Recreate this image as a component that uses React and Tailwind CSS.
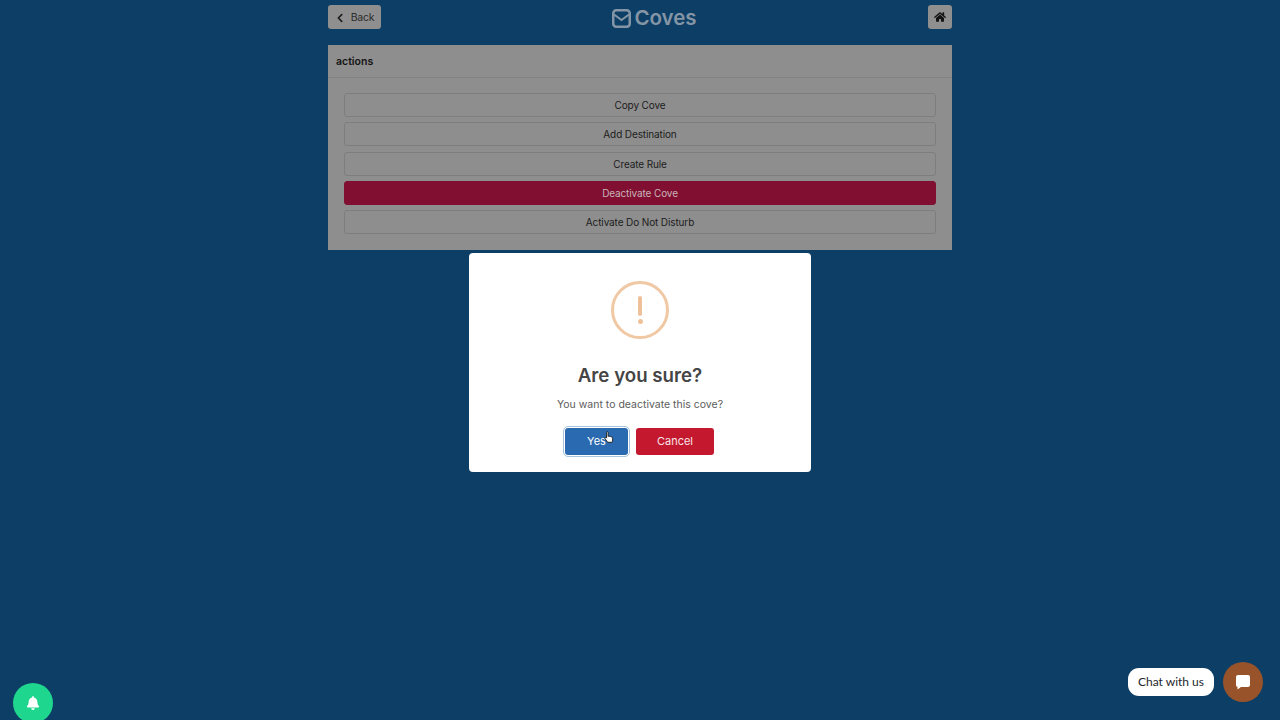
import { FaBell, FaChevronLeft, FaHome } from "react-icons/fa";

const actions = [
    { label: "Copy Cove" },
    { label: "Add Destination" },
    { label: "Create Rule" },
    { label: "Deactivate Cove", danger: true },
    { label: "Activate Do Not Disturb" },
];

function ActionButton({ label, danger }) {
    const tone = danger
        ? "bg-[#800f31] border-[#800f31] text-[#c9b4ba]"
        : "border-[#7e7e7e] text-[#1c1c1c]";
    return (
        <div className={`h-6 pt-[1px] flex items-center justify-center rounded-[3px] border text-[10px] tracking-[-0.12px] ${tone}`}>
            {label}
        </div>
    );
}

function ConfirmModal() {
    return (
        <div className="absolute left-[469px] top-[253px] w-[342px] h-[219px] bg-white rounded-[4px] flex flex-col items-center pt-[28px]">
            <div className="w-[58px] h-[58px] rounded-full border-[3px] border-[#f0c8a4] flex flex-col items-center justify-center">
                <div className="w-1 h-[20px] rounded-full bg-[#eec19b]" />
                <div className="w-[5px] h-[5px] rounded-full bg-[#eec19b] mt-[3px]" />
            </div>
            <h2 className="mt-[23px] text-[18.7px] leading-[28px] font-semibold text-[#454545]">Are you sure?</h2>
            <p className="mt-[7px] text-[10.5px] leading-4 text-[#5c5c5c]">You want to deactivate this cove?</p>
            <div className="mt-[15px] mr-[1px] flex items-center gap-2">
                <div className="relative w-[63px] h-[27px] rounded-[3px] bg-[#2a6ab1] outline-[1.5px] outline-offset-[1px] outline-[#a9c4de] flex items-center justify-center text-[11px] text-white">
                    Yes
                    <svg className="absolute left-[39px] top-[3px]" width="11" height="14" viewBox="0 0 11 14">
                        <path d="M2.6 1.4c0-1 1.5-1 1.5 0v4l.4-.1c.5-.3 1.1-.1 1.3.3.5-.3 1.1-.1 1.3.4.6-.3 1.3.1 1.4.7.4 1.6.2 3-.4 4.6H3.7L1 7.6c-.6-.8.4-1.7 1.1-1l.5.5z" fill="#fff" stroke="#22262b" strokeWidth="1" strokeLinejoin="round" />
                    </svg>
                </div>
                <div className="w-[78px] h-[27px] rounded-[3px] bg-[#c4182f] flex items-center justify-center text-[11px] text-[#f8e3e6]">
                    Cancel
                </div>
            </div>
        </div>
    );
}

export default function App() {
    return (
        <div className="relative w-[1280px] h-[720px] overflow-hidden bg-[#0d3f66] font-['Inter',sans-serif]">
            <div className="w-[624px] ml-[328px]">
                <header className="h-[45px] pt-[5px] flex items-start justify-between">
                    <div className="w-[53px] h-6 pt-[1px] rounded-[3px] bg-[#8f8f8f] flex items-center justify-center gap-[6px] text-[10.5px] tracking-[-0.2px] text-[#2c2c2c]">
                        <FaChevronLeft className="w-[10px] h-[10px] text-[#1c1c1c]" />
                        Back
                    </div>
                    <div className="h-[26px] flex items-center gap-[3px] text-[20.5px] font-semibold text-[#8495a5]">
                        <svg width="19" height="19" viewBox="0 0 19 19" fill="none" stroke="#8495a5">
                            <rect x="1.25" y="1.25" width="16.5" height="16.5" rx="3" strokeWidth="2.5" />
                            <path d="M2 5.5l7.5 5.5 7.5-5.5" strokeWidth="2" />
                        </svg>
                        Coves
                    </div>
                    <div className="w-6 h-6 rounded-[3px] bg-[#8f8f8f] flex items-center justify-center">
                        <FaHome className="w-3 h-3 text-[#141414]" />
                    </div>
                </header>

                <section className="h-[205px] bg-[#8e8e8e]">
                    <div className="h-[33px] pt-[2px] px-2 flex items-center border-b border-[#828282] text-[10.5px] font-semibold text-[#141414]">
                        actions
                    </div>
                    <div className="px-4 pt-[15px] flex flex-col gap-[5.33px]">
                        {actions.map((action) => (
                            <ActionButton key={action.label} {...action} />
                        ))}
                    </div>
                </section>
            </div>

            <ConfirmModal />

            <div className="absolute left-[13px] top-[683px] w-10 h-10 rounded-full bg-[#1fd68f] flex items-center justify-center">
                <FaBell className="w-[14px] h-[14px] text-white" />
            </div>

            <div className="absolute right-[17px] top-[662px] flex items-center gap-[9px]">
                <div className="h-[28px] w-[86px] rounded-[11px] bg-white flex items-center justify-center font-['Lato',sans-serif] text-[12px] text-[#23262b]">
                    Chat with us
                </div>
                <div className="w-10 h-10 rounded-full bg-[#99532b] flex items-center justify-center">
                    <svg width="16" height="16" viewBox="0 0 16 16">
                        <path d="M3 1h10a2 2 0 0 1 2 2v8a2 2 0 0 1-2 2H6l-3.5 2.5V13A2 2 0 0 1 1 11V3a2 2 0 0 1 2-2z" fill="#fff" />
                    </svg>
                </div>
            </div>
        </div>
    );
}
